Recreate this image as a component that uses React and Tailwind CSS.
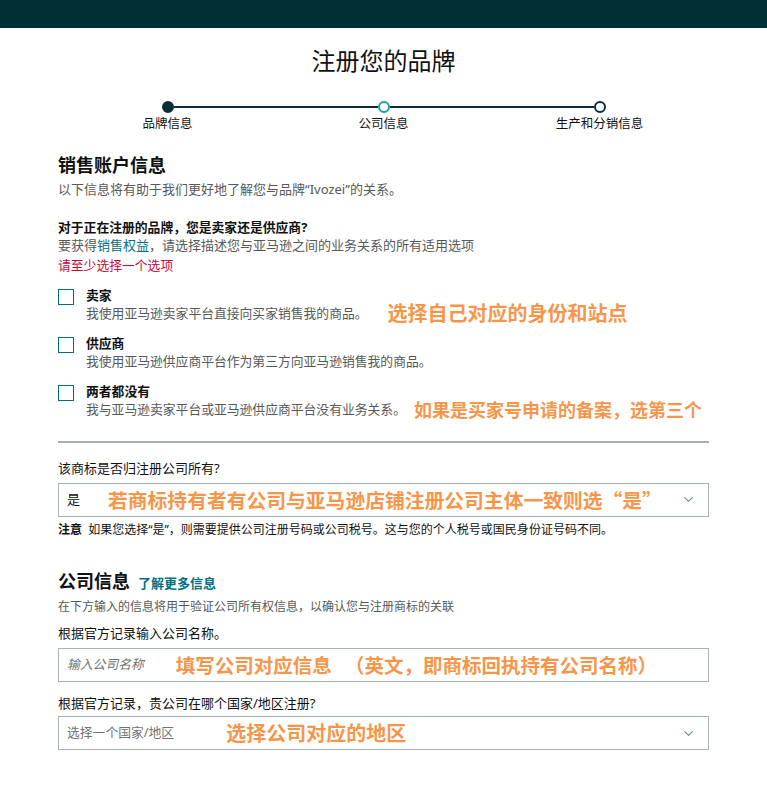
import React from "react";
import { ChevronDown } from "lucide-react";

const FONT = { fontFamily: '"Noto Sans", "Noto Sans CJK SC", sans-serif' };
const CJK = { fontFamily: '"Noto Sans CJK SC", sans-serif' };

const Step = ({ label, kind }) => {
  const dot =
    kind === "done"
      ? "bg-[#0a2e36] border-[#0a2e36]"
      : kind === "active"
      ? "bg-white border-[#14a0b0]"
      : "bg-white border-[#0a2e36]";
  return (
    <div className="w-3 flex flex-col items-center">
      <div className={`w-3 h-3 rounded-full border-2 ${dot}`} />
      <span className="mt-[3px] text-[12.5px] leading-4 text-[#0f1111] whitespace-nowrap">{label}</span>
    </div>
  );
};

// orange hand-written annotations laid over the form
const Note = ({ children, className = "" }) => (
  <span style={CJK} className={`leading-4 font-bold text-[#f7964a] whitespace-pre ${className}`}>{children}</span>
);

const CheckRow = ({ title, desc, note, noteClass }) => (
  <div className="flex gap-3">
    <div className="w-4 h-4 mt-[3px] border-[1.5px] border-[#00707c] bg-white shrink-0" />
    <div className="flex flex-col">
      <span className="text-[12.8px] leading-[18px] font-bold text-[#0f1111]">{title}</span>
      <div className="flex items-center h-[18px]">
        <span className="text-[12.8px] leading-[18px] text-[#565959] whitespace-nowrap">{desc}</span>
        {note && <Note className={noteClass}>{note}</Note>}
      </div>
    </div>
  </div>
);

export default function App() {
  return (
    <div className="min-h-screen bg-white" style={FONT}>
      <div className="h-[28px] bg-[#002f36]" />

      <h1 className="mt-[17px] text-center text-[24px] leading-8 text-[#0f1111]">注册您的品牌</h1>

      {/* stepper */}
      <div className="mt-6 mx-auto w-[444px] flex items-start">
        <Step label="品牌信息" kind="done" />
        <div className="flex-1 h-[2px] mt-[5px] bg-[#0a2e36]" />
        <Step label="公司信息" kind="active" />
        <div className="flex-1 h-[2px] mt-[5px] bg-[#0a2e36]" />
        <Step label="生产和分销信息" kind="next" />
      </div>

      <main className="px-[58px] pb-10">
        <h2 className="mt-[21px] text-[18px] leading-6 font-bold text-[#0f1111]">销售账户信息</h2>
        <p className="mt-[3px] text-[13px] leading-[18px] text-[#565959]">以下信息将有助于我们更好地了解您与品牌“Ivozei”的关系。</p>

        <p className="mt-5 text-[12.8px] leading-[18px] font-bold text-[#0f1111]">对于正在注册的品牌，您是卖家还是供应商?</p>
        <p className="text-[13px] leading-[18px] text-[#565959]">
          要获得<span className="text-[#007185]">销售权益</span>，请选择描述您与亚马逊之间的业务关系的所有适用选项
        </p>
        <p className="mt-[2px] text-[12.8px] leading-[18px] text-[#c7093c]">请至少选择一个选项</p>

        <div className="mt-[12px] flex flex-col gap-3">
          <CheckRow title="卖家" desc="我使用亚马逊卖家平台直接向买家销售我的商品。" note="选择自己对应的身份和站点" noteClass="ml-[20px] text-[20px]" />
          <CheckRow title="供应商" desc="我使用亚马逊供应商平台作为第三方向亚马逊销售我的商品。" />
          <CheckRow title="两者都没有" desc="我与亚马逊卖家平台或亚马逊供应商平台没有业务关系。" note="如果是买家号申请的备案，选第三个" noteClass="ml-[8px] text-[18px]" />
        </div>

        <div className="mt-[23px] h-[1.5px] bg-[#a9afb0]" />

        <p className="mt-4 text-[13px] leading-[18px] text-[#0f1111]">该商标是否归注册公司所有?</p>
        <div className="mt-[6px] h-[34px] border border-[#a6b2b5] flex items-center pl-[8px] pr-[12px]">
          <span className="text-[13px] text-[#0f1111]">是</span>
          <Note className="ml-[28px] text-[19.8px]">若商标持有者有公司与亚马逊店铺注册公司主体一致则选“是”</Note>
          <ChevronDown size={15} strokeWidth={1.75} className="ml-auto text-[#6f8a96]" />
        </div>
        <p className="mt-[5px] text-[12px] leading-4 text-[#0f1111]">
          <span className="font-bold">注意</span>&nbsp; 如果您选择“是”，则需要提供公司注册号码或公司税号。这与您的个人税号或国民身份证号码不同。
        </p>

        <div className="mt-[31px] flex items-baseline gap-2">
          <h2 className="text-[18px] leading-6 font-bold text-[#0f1111]">公司信息</h2>
          <span className="text-[13px] font-bold text-[#007185]">了解更多信息</span>
        </div>
        <p className="mt-[7px] text-[12px] leading-[14px] text-[#565959]">在下方输入的信息将用于验证公司所有权信息，以确认您与注册商标的关联</p>

        <p className="mt-[10px] text-[13px] leading-[18px] text-[#0f1111]">根据官方记录输入公司名称。</p>
        <div className="mt-[6px] h-[34px] border border-[#a6b2b5] flex items-center pl-[8px]">
          <span className="text-[12.8px] italic text-[#6f7373]">输入公司名称</span>
          <Note className="ml-[32px] text-[19.5px]">{"填写公司对应信息   （英文，即商标回执持有公司名称）"}</Note>
        </div>

        <p className="mt-[12px] text-[13px] leading-[18px] text-[#0f1111]">根据官方记录，贵公司在哪个国家/地区注册?</p>
        <div className="mt-[4px] h-[34px] border border-[#a6b2b5] flex items-center pl-[8px] pr-[12px]">
          <span className="text-[12.8px] text-[#6f7373]">选择一个国家/地区</span>
          <Note className="ml-[52px] text-[20px]">选择公司对应的地区</Note>
          <ChevronDown size={15} strokeWidth={1.75} className="ml-auto text-[#6f8a96]" />
        </div>
      </main>
    </div>
  );
}
